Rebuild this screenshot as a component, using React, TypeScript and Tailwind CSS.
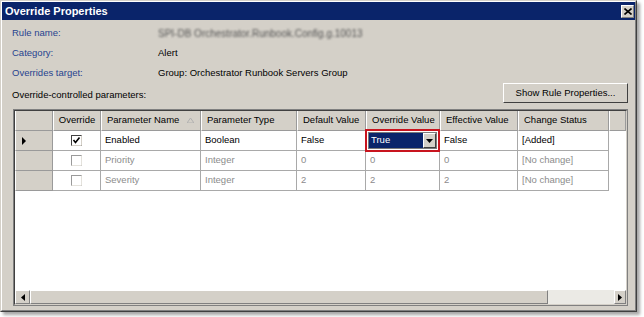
import React from "react";

const FONT = { fontFamily: '"Liberation Sans", Arial, sans-serif' };

type Row = {
  checked: boolean;
  name: string;
  type: string;
  def: string;
  override: string;
  effective: string;
  status: string;
  active: boolean;
};

const ROWS: Row[] = [
  { checked: true, name: "Enabled", type: "Boolean", def: "False", override: "True", effective: "False", status: "[Added]", active: true },
  { checked: false, name: "Priority", type: "Integer", def: "0", override: "0", effective: "0", status: "[No change]", active: false },
  { checked: false, name: "Severity", type: "Integer", def: "2", override: "2", effective: "2", status: "[No change]", active: false },
];

const COLS = "grid grid-cols-[38px_48px_100px_96px_69px_74px_78px_91px_1fr]";

function Raised({ className = "", children }: { className?: string; children?: React.ReactNode }) {
  return (
    <div className={`border border-t-white border-l-white border-r-[#808080] border-b-[#808080] bg-[#d4d0c8] ${className}`}>
      {children}
    </div>
  );
}

function CheckBox({ checked, enabled }: { checked: boolean; enabled: boolean }) {
  return (
    <svg width="11" height="11" viewBox="0 0 11 11">
      <rect x="0.5" y="0.5" width="10" height="10" fill="white" stroke={enabled ? "#404040" : "#9a9a9a"} />
      <path d="M0.5 10.5 L10.5 10.5 L10.5 0.5" fill="none" stroke={enabled ? "#d4d0c8" : "#e4e2dc"} />
      {checked && <path d="M2.5 5 L4.5 7.5 L8.5 2.5" fill="none" stroke="black" strokeWidth="1.6" />}
    </svg>
  );
}

function Arrow({ dir }: { dir: "left" | "right" | "down" }) {
  if (dir === "down")
    return (
      <svg width="7" height="4" viewBox="0 0 7 4">
        <polygon points="0,0 7,0 3.5,4" fill="black" />
      </svg>
    );
  return (
    <svg width="4" height="7" viewBox="0 0 4 7">
      <polygon points={dir === "left" ? "4,0 4,7 0,3.5" : "0,0 0,7 4,3.5"} fill="black" />
    </svg>
  );
}

function HeaderCell({ children, center = false }: { children?: React.ReactNode; center?: boolean }) {
  return (
    <div
      className={`flex h-[20px] items-center overflow-hidden whitespace-nowrap border-r border-b border-r-[#9a9a9a] border-b-[#9a9a9a] border-l border-l-white bg-[#d4d0c8] text-black ${
        center ? "justify-center" : "pl-[5px]"
      }`}
    >
      {children}
    </div>
  );
}

function Cell({ children, muted }: { children?: React.ReactNode; muted: boolean }) {
  return (
    <div
      className={`flex h-[20px] items-center border-r border-b border-[#a9a9a9] bg-white pl-[4px] ${
        muted ? "text-[#8c8c8c]" : "text-black"
      }`}
    >
      {children}
    </div>
  );
}

export default function App() {
  return (
    <div className="h-[317px] w-[644px] bg-white text-[9.5px]" style={FONT}>
      <div className="h-[312px] w-[637px] border border-t-[#d4d0c8] border-l-[#d4d0c8] border-r-[#404040] border-b-[#404040] bg-[#d4d0c8] shadow-[3px_3px_3px_rgba(0,0,0,0.35)]">
        <div className="flex h-full flex-col border border-t-white border-l-white border-r-[#808080] border-b-[#808080]">
          {/* Title bar */}
          <div className="flex h-[18px] items-center justify-between bg-[#0a246a] pl-[3px] pr-[1px]">
            <span className="text-[11px] font-bold text-white">Override Properties</span>
            <Raised className="flex h-[13px] w-[13px] items-center justify-center">
              <svg width="8" height="7" viewBox="0 0 8 7">
                <path d="M0.5 0.5 L7.5 6.5 M7.5 0.5 L0.5 6.5" stroke="black" strokeWidth="1.6" />
              </svg>
            </Raised>
          </div>

          {/* Properties */}
          <div className="flex flex-col pl-[10px] pr-[7px] pt-[3px]">
            {[
              ["Rule name:", null],
              ["Category:", "Alert"],
              ["Overrides target:", "Group: Orchestrator Runbook Servers Group"],
            ].map(([label, value]) => (
              <div key={label as string} className="flex h-[20px] items-center">
                <span className="w-[146px] text-[#27438f]">{label}</span>
                {value ? (
                  <span className="text-black">{value}</span>
                ) : (
                  <span className="blur-[1.2px] text-[10px] text-[#555555]">SPI-DB Orchestrator.Runbook.Config.g.10013</span>
                )}
              </div>
            ))}
            <div className="flex h-[20px] items-end justify-between">
              <span className="pb-[1px] text-black">Override-controlled parameters:</span>
              <div className="flex h-[20px] w-[125px] items-center justify-center border border-t-white border-l-white border-r-[#404040] border-b-[#404040] bg-[#d4d0c8]">
                <span className="text-black">Show Rule Properties...</span>
              </div>
            </div>
          </div>

          {/* Grid */}
          <div className="ml-[11px] mr-[7px] mt-[6px] h-[197px] border border-[#808080]">
            <div className="flex h-full flex-col border border-t-[#404040] border-l-[#404040] border-r-[#d4d0c8] border-b-[#d4d0c8] bg-white">
              <div className={COLS}>
                <HeaderCell />
                <HeaderCell center>Override</HeaderCell>
                <HeaderCell>
                  <span className="flex-1">Parameter Name</span>
                  <svg width="7" height="5" viewBox="0 0 7 5" className="mr-[6px]">
                    <polygon points="3.5,0 7,5 0,5" fill="none" stroke="#b0b0b0" />
                  </svg>
                </HeaderCell>
                <HeaderCell>Parameter Type</HeaderCell>
                <HeaderCell>Default Value</HeaderCell>
                <HeaderCell>Override Value</HeaderCell>
                <HeaderCell>Effective Value</HeaderCell>
                <HeaderCell>Change Status</HeaderCell>
                <HeaderCell />
              </div>

              {ROWS.map((r, i) => (
                <div key={r.name} className={COLS}>
                  <div className="flex h-[20px] items-center border-r border-b border-l border-l-white border-r-[#9a9a9a] border-b-[#9a9a9a] bg-[#d4d0c8] pl-[6px]">
                    {i === 0 && (
                      <svg width="4" height="8" viewBox="0 0 4 8">
                        <polygon points="0,0 4,4 0,8" fill="black" />
                      </svg>
                    )}
                  </div>
                  <div className="flex h-[20px] items-center justify-center border-r border-b border-[#a9a9a9] bg-white">
                    <CheckBox checked={r.checked} enabled={r.active} />
                  </div>
                  <Cell muted={!r.active}>{r.name}</Cell>
                  <Cell muted={!r.active}>{r.type}</Cell>
                  <Cell muted={!r.active}>{r.def}</Cell>
                  {i === 0 ? (
                    <div className="relative h-[20px] border-r border-b border-[#a9a9a9] bg-white">
                      <div className="absolute left-[-1px] top-[-2px] flex h-[23px] w-[75px] items-center border-2 border-[#c8141e] p-[1px]">
                        <div className="flex h-full w-full items-stretch border border-[#7a7a7a]">
                          <div className="flex flex-1 items-center bg-[#0a246a] pl-[2px] text-white">{r.override}</div>
                          <div className="flex w-[13px] items-center justify-center border border-t-white border-l-white border-r-[#404040] border-b-[#404040] bg-[#d4d0c8]">
                            <Arrow dir="down" />
                          </div>
                        </div>
                      </div>
                    </div>
                  ) : (
                    <Cell muted>{r.override}</Cell>
                  )}
                  <Cell muted={!r.active}>{r.effective}</Cell>
                  <Cell muted={!r.active}>{r.status}</Cell>
                  <div className="h-[20px] bg-white" />
                </div>
              ))}

              <div className="flex-1 bg-white" />

              {/* Horizontal scrollbar */}
              <div className="flex h-[14px] bg-[#ebeae5]">
                <Raised className="flex w-[15px] items-center justify-center">
                  <Arrow dir="left" />
                </Raised>
                <Raised className="w-[518px]" />
                <div className="flex-1" />
                <Raised className="flex w-[12px] items-center justify-center">
                  <Arrow dir="right" />
                </Raised>
              </div>
            </div>
          </div>
        </div>
      </div>
    </div>
  );
}
